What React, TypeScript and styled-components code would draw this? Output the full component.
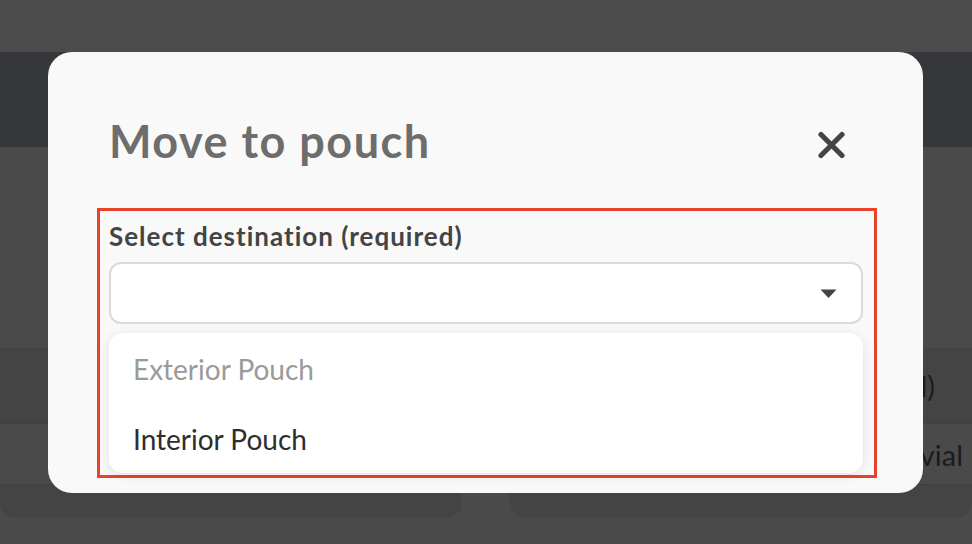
import React from "react";
import styled, { createGlobalStyle } from "styled-components";

const GlobalStyle = createGlobalStyle`
  html, body {
    margin: 0;
    padding: 0;
    background: #4a4a4a;
    font-family: "Lato", "Noto Sans", sans-serif;
  }
  * { box-sizing: border-box; }
`;

// Page behind the dimmed overlay
const Page = styled.div`
  position: relative;
  width: 972px;
  height: 544px;
  overflow: hidden;
  display: flex;
  flex-direction: column;
  background: #4a4a4a;
`;

const TopBar = styled.div`
  height: 52px;
  background: #4b4b4b;
`;

const Header = styled.div`
  height: 95px;
  background: #36373a;
`;

const Spacer = styled.div`
  height: 201px;
`;

const TableRow = styled.div<{ $head?: boolean; $h: number }>`
  height: ${(p) => p.$h}px;
  display: flex;
  align-items: center;
  justify-content: flex-end;
  padding-right: ${(p) => (p.$head ? 37 : 9)}px;
  background: ${(p) => (p.$head ? "#444444" : "#4a4a4a")};
  border-bottom: 1px solid #404040;
  color: #1c1c1c;
  font-size: 29px;
`;

const Cards = styled.div`
  display: flex;
  justify-content: space-between;
`;

const Card = styled.div`
  width: 462px;
  height: 33px;
  background: #444444;
  border-radius: 0 0 16px 16px;
`;

// Modal
const Modal = styled.div`
  position: absolute;
  left: 48px;
  top: 52px;
  width: 875px;
  height: 441px;
  overflow: hidden;
  background: #f9f9f9;
  border-radius: 24px;
  padding: 62px 46px 0 49px;
  display: flex;
  flex-direction: column;
`;

const TitleRow = styled.div`
  display: flex;
  justify-content: space-between;
  align-items: flex-start;
  padding-left: 12px;
  padding-right: 31px;
`;

const Title = styled.h2`
  margin: 0;
  font-size: 45px;
  line-height: 1.2;
  font-weight: 700;
  color: #6d6d6d;
  letter-spacing: 1.5px;
`;

const CloseButton = styled.button`
  margin-top: 17px;
  width: 29px;
  height: 28px;
  padding: 0;
  border: none;
  background: none;
  cursor: pointer;
  color: #444444;
  display: flex;
`;

const Highlight = styled.div`
  margin-top: 40px;
  border: 3px solid #e8432a;
  padding: 10px 11px 2px 9px;
  display: flex;
  flex-direction: column;
`;

const Label = styled.label`
  font-size: 26px;
  line-height: 1.2;
  font-weight: 700;
  color: #444444;
  letter-spacing: 1px;
`;

const SelectBox = styled.div`
  margin-top: 10px;
  height: 62px;
  border: 2px solid #dadada;
  border-radius: 12px;
  background: #ffffff;
  display: flex;
  align-items: center;
  justify-content: flex-end;
  padding-right: 24px;
`;

const Menu = styled.ul`
  list-style: none;
  margin: 9px 0 0;
  padding: 0;
  background: #ffffff;
  border-radius: 14px;
  box-shadow: 0 2px 12px rgba(0, 0, 0, 0.1);
`;

const Option = styled.li<{ $disabled?: boolean }>`
  height: 70px;
  padding: 20px 24px 0;
  font-size: 28px;
  line-height: 1.2;
  color: ${(p) => (p.$disabled ? "#9a9a9a" : "#2e2e2e")};
`;

const App = () => {
  return (
    <>
      <GlobalStyle />
      <Page>
        <TopBar />
        <Header />
        <Spacer />
        <TableRow $head $h={76}>
          Volume (ml)
        </TableRow>
        <TableRow $h={61}>1 vial</TableRow>
        <Cards>
          <Card />
          <Card />
        </Cards>

        <Modal role="dialog">
          <TitleRow>
            <Title>Move to pouch</Title>
            <CloseButton aria-label="Close">
              <svg width={29} height={28} viewBox="0 0 29 28">
                <path
                  d="M4 3.5 L25 24.5 M25 3.5 L4 24.5"
                  stroke="currentColor"
                  strokeWidth={5.2}
                  strokeLinecap="round"
                  fill="none"
                />
              </svg>
            </CloseButton>
          </TitleRow>

          <Highlight>
            <Label>Select destination (required)</Label>
            <SelectBox>
              <svg width={17} height={9} viewBox="0 0 17 9">
                <path d="M0.5 0.5 H16.5 L9 8.5 Q8.5 9 8 8.5 Z" fill="#444444" />
              </svg>
            </SelectBox>
            <Menu>
              <Option $disabled>Exterior Pouch</Option>
              <Option>Interior Pouch</Option>
            </Menu>
          </Highlight>
        </Modal>
      </Page>
    </>
  );
};

export default App;
